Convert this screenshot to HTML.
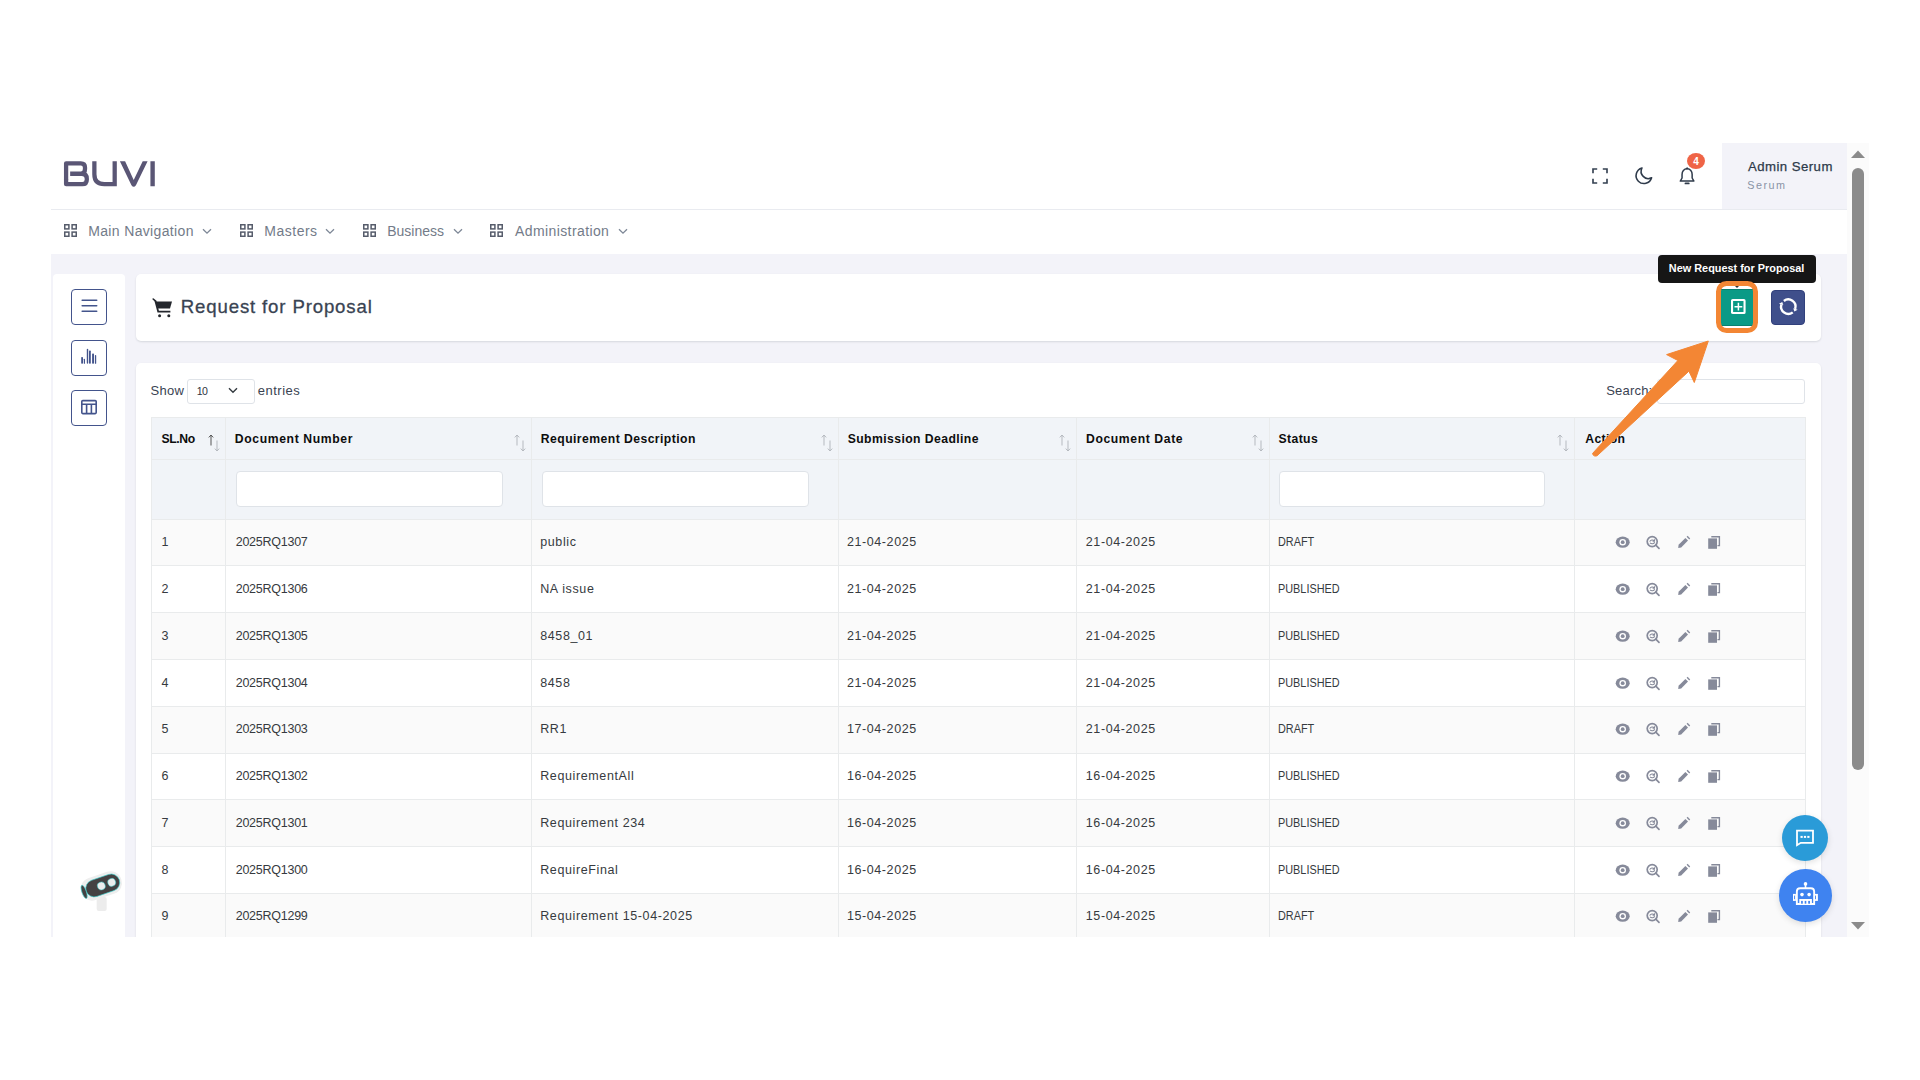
<!DOCTYPE html>
<html><head><meta charset="utf-8"><title>Request for Proposal</title>
<style>
html,body{margin:0;padding:0;}
body{width:1920px;height:1080px;overflow:hidden;background:#fff;position:relative;font-family:"Liberation Sans", sans-serif;}
.b{position:absolute;}
.t{position:absolute;white-space:pre;line-height:1;}
</style></head><body>
<div class="b" style="left:51px;top:143px;width:1796px;height:67px;background:#fff;"></div>
<div class="b" style="left:51px;top:209px;width:1796px;height:1px;background:#e9ebf0;"></div>
<svg class="b" style="left:60px;top:155px;width:100px;height:40px" viewBox="0 0 1920 768">
<g fill="none" stroke="#5a5675" stroke-width="82" stroke-linejoin="round">
<path d="M117,480 V160 H400 Q480,160 480,240 V270 Q480,345 415,360"/>
<path d="M195,360 H415 Q515,360 515,460 V470 Q515,560 430,560 H117 V470"/>
<path d="M660,120 V370 Q660,560 850,560 H1050 M1050,120 V600" stroke-linejoin="miter"/>

</g>
<rect x="1736" y="120" width="84" height="480" fill="#5a5675"/>
<path d="M1150,120 H1250 L1415,478 L1588,120 H1682 L1458,582 Q1415,640 1372,582 Z" fill="#5a5675"/>
</svg>
<svg class="b" style="left:1590px;top:166px;width:20px;height:20px" viewBox="0 0 20 20">
<path d="M3,7.2 V3 H7.2 M12.8,3 H17 V7.2 M17,12.8 V17 H12.8 M7.2,17 H3 V12.8" fill="none" stroke="#354152" stroke-width="1.65"/></svg>
<svg class="b" style="left:1633px;top:166px;width:21px;height:20px" viewBox="0 0 21 20">
<path d="M9,2 A7.9,7.9 0 1 0 18.6,11.8 A7.2,7.2 0 0 1 9,2 Z" fill="none" stroke="#2f3b4b" stroke-width="1.55" stroke-linejoin="round"/></svg>
<svg class="b" style="left:1677px;top:165px;width:20px;height:22px" viewBox="0 0 20 22">
<path d="M10.1,3.8 C6.9,3.8 5.05,6.3 5.05,9.5 V13.0 L3.3,16.1 H16.9 L15.15,13.0 V9.5 C15.15,6.3 13.3,3.8 10.1,3.8 Z" fill="none" stroke="#2f3b4b" stroke-width="1.5" stroke-linejoin="round"/>
<path d="M9.0,4.1 L10.1,2.9 L11.2,4.1" fill="none" stroke="#2f3b4b" stroke-width="1.2"/>
<path d="M8.5,18.4 H11.7" stroke="#2f3b4b" stroke-width="1.9" stroke-linecap="round"/></svg>
<div class="b" style="left:1686.5px;top:152.5px;width:18.5px;height:16.5px;border-radius:50%;background:#ef6446;"></div>
<div class="t" style="left:1693.30px;top:157.13px;font-size:10px;color:#fff;font-weight:700;letter-spacing:0px;">4</div>
<div class="b" style="left:1722px;top:143px;width:125px;height:66px;background:#f3f3f9;"></div>
<div class="t" style="left:1748.00px;top:159.83px;font-size:13.2px;color:#2d3a4a;font-weight:400;letter-spacing:0.45px;-webkit-text-stroke:0.25px #2d3a4a;">Admin Serum</div>
<div class="t" style="left:1747.20px;top:179.86px;font-size:10.8px;color:#8a94a6;font-weight:400;letter-spacing:1.5px;">Serum</div>
<div class="b" style="left:51px;top:254px;width:1796px;height:2px;background:linear-gradient(#e4e5ec,#f3f3f9);"></div>
<div class="b" style="left:51px;top:210px;width:1796px;height:44px;background:#fff;"></div>
<svg class="b" style="left:64px;top:223.5px;width:14px;height:14px" viewBox="0 0 14 14"><g fill="none" stroke="#565c6b" stroke-width="1.5"><rect x="0.75" y="0.75" width="4.15" height="4.15"/><rect x="0.75" y="8.1" width="4.15" height="4.15"/><rect x="8.1" y="0.75" width="4.15" height="4.15"/><rect x="8.1" y="8.1" width="4.15" height="4.15"/></g></svg>
<div class="t" style="left:88.20px;top:223.75px;font-size:14px;color:#737b89;font-weight:400;letter-spacing:0.35px;">Main Navigation</div>
<svg class="b" style="left:202px;top:228px;width:10px;height:7px" viewBox="0 0 10 7"><path d="M1,1.2 L5,5.2 L9,1.2" fill="none" stroke="#7d8796" stroke-width="1.3"/></svg>
<svg class="b" style="left:240px;top:223.5px;width:14px;height:14px" viewBox="0 0 14 14"><g fill="none" stroke="#565c6b" stroke-width="1.5"><rect x="0.75" y="0.75" width="4.15" height="4.15"/><rect x="0.75" y="8.1" width="4.15" height="4.15"/><rect x="8.1" y="0.75" width="4.15" height="4.15"/><rect x="8.1" y="8.1" width="4.15" height="4.15"/></g></svg>
<div class="t" style="left:264.30px;top:223.75px;font-size:14px;color:#737b89;font-weight:400;letter-spacing:0.5px;">Masters</div>
<svg class="b" style="left:325px;top:228px;width:10px;height:7px" viewBox="0 0 10 7"><path d="M1,1.2 L5,5.2 L9,1.2" fill="none" stroke="#7d8796" stroke-width="1.3"/></svg>
<svg class="b" style="left:362.5px;top:223.5px;width:14px;height:14px" viewBox="0 0 14 14"><g fill="none" stroke="#565c6b" stroke-width="1.5"><rect x="0.75" y="0.75" width="4.15" height="4.15"/><rect x="0.75" y="8.1" width="4.15" height="4.15"/><rect x="8.1" y="0.75" width="4.15" height="4.15"/><rect x="8.1" y="8.1" width="4.15" height="4.15"/></g></svg>
<div class="t" style="left:387.20px;top:223.75px;font-size:14px;color:#737b89;font-weight:400;letter-spacing:0.0px;">Business</div>
<svg class="b" style="left:452.5px;top:228px;width:10px;height:7px" viewBox="0 0 10 7"><path d="M1,1.2 L5,5.2 L9,1.2" fill="none" stroke="#7d8796" stroke-width="1.3"/></svg>
<svg class="b" style="left:490.4px;top:223.5px;width:14px;height:14px" viewBox="0 0 14 14"><g fill="none" stroke="#565c6b" stroke-width="1.5"><rect x="0.75" y="0.75" width="4.15" height="4.15"/><rect x="0.75" y="8.1" width="4.15" height="4.15"/><rect x="8.1" y="0.75" width="4.15" height="4.15"/><rect x="8.1" y="8.1" width="4.15" height="4.15"/></g></svg>
<div class="t" style="left:515.00px;top:223.75px;font-size:14px;color:#737b89;font-weight:400;letter-spacing:0.4px;">Administration</div>
<svg class="b" style="left:618px;top:228px;width:10px;height:7px" viewBox="0 0 10 7"><path d="M1,1.2 L5,5.2 L9,1.2" fill="none" stroke="#7d8796" stroke-width="1.3"/></svg>
<div class="b" style="left:51px;top:254px;width:1796px;height:683px;background:#f3f3f9;"></div>
<div class="b" style="left:1847px;top:143px;width:22px;height:794px;background:#fbfbfb;"></div>
<div class="b" style="left:1852px;top:168px;width:12px;height:602px;border-radius:6px;background:#8b8b8b;"></div>
<svg class="b" style="left:1850px;top:149px;width:16px;height:10px" viewBox="0 0 16 10"><path d="M1,9 L8,1.5 L15,9 Z" fill="#8b8b8b"/></svg>
<svg class="b" style="left:1850px;top:921px;width:16px;height:10px" viewBox="0 0 16 10"><path d="M1,1 L15,1 L8,8.5 Z" fill="#8b8b8b"/></svg>
<div class="b" style="left:53px;top:274px;width:72px;height:663px;background:#fff;border-radius:4px 4px 0 0;"></div>
<div class="b" style="left:71px;top:288.5px;width:34px;height:34px;border:1px solid #43548c;border-radius:4px;"></div>
<div class="b" style="left:71px;top:339.5px;width:34px;height:34px;border:1px solid #43548c;border-radius:4px;"></div>
<div class="b" style="left:71px;top:389.8px;width:34px;height:34px;border:1px solid #43548c;border-radius:4px;"></div>
<svg class="b" style="left:80px;top:297px;width:18px;height:18px" viewBox="0 0 18 18">
<path d="M2.2,3.2 H16.7 M2.2,8.7 H16.7 M2.2,14.2 H16.7" stroke="#43548c" stroke-width="1.6" stroke-linecap="round"/></svg>
<svg class="b" style="left:80px;top:348px;width:18px;height:18px" viewBox="0 0 18 18"><g fill="#43548c">
<rect x="1.2" y="9.0" width="1.8" height="6.8" rx="0.7"/><rect x="3.8" y="10.7" width="1.2" height="5.1" rx="0.6"/><rect x="6.8" y="0.8" width="1.4" height="15" rx="0.7"/><rect x="9.0" y="2.5" width="1.8" height="13.3" rx="0.7"/><rect x="12.1" y="5.6" width="1.9" height="10.2" rx="0.7"/><rect x="14.9" y="7.1" width="1.3" height="8.7" rx="0.6"/></g></svg>
<svg class="b" style="left:80px;top:398px;width:18px;height:18px" viewBox="0 0 18 18">
<g fill="none" stroke="#43548c" stroke-width="1.6"><rect x="1.8" y="2.6" width="14.4" height="13" rx="1"/>
<path d="M1.8,6.2 H16.2 M6.6,6.2 V15.6 M11.4,6.2 V15.6"/></g></svg>
<svg class="b" style="left:75px;top:864px;width:52px;height:50px" viewBox="0 0 52 50">
<rect x="21.7" y="33" width="10" height="14" rx="2" fill="#ececec"/>
<g transform="rotate(-19 26 21)">
<rect x="5" y="10.5" width="42" height="23" rx="11" fill="#eeeeee"/>
<rect x="10" y="13.5" width="35" height="17" rx="8.5" fill="#444142" stroke="#3fd0cf" stroke-width="0.6"/>
<ellipse cx="7.8" cy="22" rx="2.2" ry="7" fill="#444142" stroke="#3fd0cf" stroke-width="0.6"/>
<circle cx="26" cy="22" r="3.9" fill="#ececec" stroke="#3fd0cf" stroke-width="0.5"/>
<circle cx="37" cy="22" r="3.9" fill="#ececec" stroke="#3fd0cf" stroke-width="0.5"/>
</g></svg>
<div class="b" style="left:136px;top:274px;width:1684.6px;height:67px;background:#fff;border-radius:5px;box-shadow:0 1px 2px rgba(56,65,74,0.15);"></div>
<svg class="b" style="left:151.7px;top:297.6px;width:22px;height:21px" viewBox="0 0 22 21">
<path d="M1.2,1 L3.6,3.2" stroke="#24272d" stroke-width="1.6" stroke-linecap="round"/>
<path d="M3.2,3.4 H20 L18,10.6 H6 Z" fill="#24272d"/>
<path d="M3.4,3 L6.2,13.6 H18.4" fill="none" stroke="#24272d" stroke-width="1.8"/>
<circle cx="7.6" cy="17.8" r="1.5" fill="#24272d"/><circle cx="16.8" cy="17.8" r="1.5" fill="#24272d"/></svg>
<div class="t" style="left:180.80px;top:297.86px;font-size:18.6px;color:#394352;font-weight:400;letter-spacing:0.86px;-webkit-text-stroke:0.3px #394352;">Request for Proposal</div>
<div class="b" style="left:1771.2px;top:289.9px;width:33.7px;height:34.7px;box-sizing:border-box;border:1px solid #31407c;border-radius:4px;background:#3f4f8b;"></div>
<svg class="b" style="left:1770px;top:288px;width:36px;height:38px" viewBox="0 0 36 38">
<g fill="none" stroke="#fff" stroke-width="2.4"><path d="M22.73,24.37 A7.2,7.2 0 0 1 11.45,16.48"/><path d="M13.87,13.03 A7.2,7.2 0 0 1 25.15,20.92"/></g>
<path d="M12.26,14.00 L8.98,15.67 L13.35,17.09 Z M24.34,23.40 L27.62,21.73 L23.25,20.31 Z" fill="#fff"/></svg>
<div class="b" style="left:1718px;top:283px;width:38px;height:48px;border-radius:10px;background:#fff;"></div>
<div class="b" style="left:1720px;top:289px;width:35px;height:36.5px;box-sizing:border-box;border-top:1px solid #08806f;border-bottom:1px solid #08806f;background:#0a9a86;"></div>
<svg class="b" style="left:1729.5px;top:298px;width:17px;height:17px" viewBox="0 0 17 17">
<rect x="2.05" y="2.05" width="12.5" height="13" rx="0.6" fill="none" stroke="#fff" stroke-width="2.1"/>
<path d="M8.4,4.8 V12.6 M4.5,8.7 H12.3" stroke="#fff" stroke-width="1.5"/></svg>
<div class="b" style="left:1658px;top:255.4px;width:158px;height:27.4px;border-radius:4px;background:#161616;"></div>
<div class="t" style="left:1668.80px;top:263.37px;font-size:10.9px;color:#fff;font-weight:700;letter-spacing:0.0px;">New Request for Proposal</div>
<svg class="b" style="left:1735px;top:285.5px;width:4px;height:3px" viewBox="0 0 4 3"><path d="M0,0 H4 L2,2 Z" fill="#333"/></svg>
<div class="b" style="left:1716px;top:281px;width:42px;height:52px;box-sizing:border-box;border:5px solid #f38634;border-radius:10.5px;"></div>
<div class="b" style="left:136px;top:363px;width:1684.6px;height:600px;background:#fff;border-radius:5px;box-shadow:0 1px 2px rgba(56,65,74,0.15);"></div>
<div class="t" style="left:150.50px;top:384.00px;font-size:13px;color:#3a4352;font-weight:400;letter-spacing:0.3px;">Show</div>
<div class="b" style="left:187.3px;top:378.6px;width:68px;height:25px;box-sizing:border-box;border:1px solid #dfe3e8;border-radius:3px;"></div>
<div class="t" style="left:196.80px;top:385.83px;font-size:10.6px;color:#2f3542;font-weight:400;letter-spacing:-0.7px;">10</div>
<svg class="b" style="left:227.5px;top:386.8px;width:10px;height:7px" viewBox="0 0 10 7"><path d="M1,1.2 L5,5.2 L9,1.2" fill="none" stroke="#343a40" stroke-width="1.4"/></svg>
<div class="t" style="left:257.80px;top:384.00px;font-size:13px;color:#3a4352;font-weight:400;letter-spacing:0.5px;">entries</div>
<div class="t" style="left:1606.20px;top:384.20px;font-size:13px;color:#3a4352;font-weight:400;letter-spacing:0.2px;">Search:</div>
<div class="b" style="left:1657px;top:378.6px;width:148px;height:25px;box-sizing:border-box;border:1px solid #dfe3e8;border-radius:3px;background:#fff;"></div>
<div class="b" style="left:151px;top:417.3px;width:1654px;height:101.90000000000003px;background:#f1f4f8;"></div>
<div class="b" style="left:151px;top:519.20px;width:1654px;height:46.78px;background:#fafafa;"></div>
<div class="b" style="left:151px;top:565.98px;width:1654px;height:46.78px;background:#ffffff;"></div>
<div class="b" style="left:151px;top:612.76px;width:1654px;height:46.78px;background:#fafafa;"></div>
<div class="b" style="left:151px;top:659.54px;width:1654px;height:46.78px;background:#ffffff;"></div>
<div class="b" style="left:151px;top:706.32px;width:1654px;height:46.78px;background:#fafafa;"></div>
<div class="b" style="left:151px;top:753.10px;width:1654px;height:46.78px;background:#ffffff;"></div>
<div class="b" style="left:151px;top:799.88px;width:1654px;height:46.78px;background:#fafafa;"></div>
<div class="b" style="left:151px;top:846.66px;width:1654px;height:46.78px;background:#ffffff;"></div>
<div class="b" style="left:151px;top:893.44px;width:1654px;height:46.78px;background:#fafafa;"></div>
<div class="b" style="left:151px;top:417.30px;width:1654px;height:1px;background:#e9ebec;"></div>
<div class="b" style="left:151px;top:458.80px;width:1654px;height:1px;background:#e9ebec;"></div>
<div class="b" style="left:151px;top:518.60px;width:1654px;height:1px;background:#e9ebec;"></div>
<div class="b" style="left:151px;top:565.38px;width:1654px;height:1px;background:#e9ebec;"></div>
<div class="b" style="left:151px;top:612.16px;width:1654px;height:1px;background:#e9ebec;"></div>
<div class="b" style="left:151px;top:658.94px;width:1654px;height:1px;background:#e9ebec;"></div>
<div class="b" style="left:151px;top:705.72px;width:1654px;height:1px;background:#e9ebec;"></div>
<div class="b" style="left:151px;top:752.50px;width:1654px;height:1px;background:#e9ebec;"></div>
<div class="b" style="left:151px;top:799.28px;width:1654px;height:1px;background:#e9ebec;"></div>
<div class="b" style="left:151px;top:846.06px;width:1654px;height:1px;background:#e9ebec;"></div>
<div class="b" style="left:151px;top:892.84px;width:1654px;height:1px;background:#e9ebec;"></div>
<div class="b" style="left:151px;top:939.62px;width:1654px;height:1px;background:#e9ebec;"></div>
<div class="b" style="left:150.50px;top:417.30px;width:1px;height:519.70px;background:#e9ebec;"></div>
<div class="b" style="left:225.00px;top:417.30px;width:1px;height:519.70px;background:#e9ebec;"></div>
<div class="b" style="left:531.00px;top:417.30px;width:1px;height:519.70px;background:#e9ebec;"></div>
<div class="b" style="left:837.90px;top:417.30px;width:1px;height:519.70px;background:#e9ebec;"></div>
<div class="b" style="left:1076.20px;top:417.30px;width:1px;height:519.70px;background:#e9ebec;"></div>
<div class="b" style="left:1268.70px;top:417.30px;width:1px;height:519.70px;background:#e9ebec;"></div>
<div class="b" style="left:1574.30px;top:417.30px;width:1px;height:519.70px;background:#e9ebec;"></div>
<div class="b" style="left:1804.50px;top:417.30px;width:1px;height:519.70px;background:#e9ebec;"></div>
<div class="t" style="left:161.50px;top:432.77px;font-size:12.2px;color:#0d0d0d;font-weight:700;letter-spacing:-0.4px;">SL.No</div>
<div class="t" style="left:234.80px;top:432.77px;font-size:12.2px;color:#0d0d0d;font-weight:700;letter-spacing:0.62px;">Document Number</div>
<div class="t" style="left:540.80px;top:432.77px;font-size:12.2px;color:#0d0d0d;font-weight:700;letter-spacing:0.44px;">Requirement Description</div>
<div class="t" style="left:847.70px;top:432.77px;font-size:12.2px;color:#0d0d0d;font-weight:700;letter-spacing:0.42px;">Submission Deadline</div>
<div class="t" style="left:1086.00px;top:432.77px;font-size:12.2px;color:#0d0d0d;font-weight:700;letter-spacing:0.6px;">Document Date</div>
<div class="t" style="left:1278.50px;top:432.77px;font-size:12.2px;color:#0d0d0d;font-weight:700;letter-spacing:0.4px;">Status</div>
<div class="t" style="left:1585.30px;top:432.77px;font-size:12.2px;color:#0d0d0d;font-weight:700;letter-spacing:0.35px;">Action</div>
<svg class="b" style="left:208.0px;top:434px;width:12px;height:18px" viewBox="0 0 12 18"><path d="M3,1 V11.5 M0.8,3.4 L3,1 L5.2,3.4" fill="none" stroke="#555" stroke-width="1"/><path d="M9,6.5 V17 M6.8,14.6 L9,17 L11.2,14.6" fill="none" stroke="#b5b9bf" stroke-width="1"/></svg>
<svg class="b" style="left:514.0px;top:434px;width:12px;height:18px" viewBox="0 0 12 18"><path d="M3,1 V11.5 M0.8,3.4 L3,1 L5.2,3.4" fill="none" stroke="#b5b9bf" stroke-width="1"/><path d="M9,6.5 V17 M6.8,14.6 L9,17 L11.2,14.6" fill="none" stroke="#b5b9bf" stroke-width="1"/></svg>
<svg class="b" style="left:820.9px;top:434px;width:12px;height:18px" viewBox="0 0 12 18"><path d="M3,1 V11.5 M0.8,3.4 L3,1 L5.2,3.4" fill="none" stroke="#b5b9bf" stroke-width="1"/><path d="M9,6.5 V17 M6.8,14.6 L9,17 L11.2,14.6" fill="none" stroke="#b5b9bf" stroke-width="1"/></svg>
<svg class="b" style="left:1059.2px;top:434px;width:12px;height:18px" viewBox="0 0 12 18"><path d="M3,1 V11.5 M0.8,3.4 L3,1 L5.2,3.4" fill="none" stroke="#b5b9bf" stroke-width="1"/><path d="M9,6.5 V17 M6.8,14.6 L9,17 L11.2,14.6" fill="none" stroke="#b5b9bf" stroke-width="1"/></svg>
<svg class="b" style="left:1251.7px;top:434px;width:12px;height:18px" viewBox="0 0 12 18"><path d="M3,1 V11.5 M0.8,3.4 L3,1 L5.2,3.4" fill="none" stroke="#b5b9bf" stroke-width="1"/><path d="M9,6.5 V17 M6.8,14.6 L9,17 L11.2,14.6" fill="none" stroke="#b5b9bf" stroke-width="1"/></svg>
<svg class="b" style="left:1557.3px;top:434px;width:12px;height:18px" viewBox="0 0 12 18"><path d="M3,1 V11.5 M0.8,3.4 L3,1 L5.2,3.4" fill="none" stroke="#b5b9bf" stroke-width="1"/><path d="M9,6.5 V17 M6.8,14.6 L9,17 L11.2,14.6" fill="none" stroke="#b5b9bf" stroke-width="1"/></svg>
<div class="b" style="left:236px;top:471.2px;width:266.5px;height:35.8px;box-sizing:border-box;border:1px solid #dfe3e8;border-radius:4px;background:#fff;"></div>
<div class="b" style="left:541.7px;top:471.2px;width:267.29999999999995px;height:35.8px;box-sizing:border-box;border:1px solid #dfe3e8;border-radius:4px;background:#fff;"></div>
<div class="b" style="left:1278.9px;top:471.2px;width:266.5999999999999px;height:35.8px;box-sizing:border-box;border:1px solid #dfe3e8;border-radius:4px;background:#fff;"></div>
<div class="t" style="left:161.50px;top:536.22px;font-size:12.5px;color:#363a40;font-weight:400;letter-spacing:0px;">1</div>
<div class="t" style="left:235.70px;top:536.22px;font-size:12.5px;color:#363a40;font-weight:400;letter-spacing:-0.25px;">2025RQ1307</div>
<div class="t" style="left:540.20px;top:536.22px;font-size:12.5px;color:#363a40;font-weight:400;letter-spacing:0.62px;">public</div>
<div class="t" style="left:846.90px;top:536.22px;font-size:12.5px;color:#363a40;font-weight:400;letter-spacing:0.6px;">21-04-2025</div>
<div class="t" style="left:1085.80px;top:536.22px;font-size:12.5px;color:#363a40;font-weight:400;letter-spacing:0.6px;">21-04-2025</div>
<div class="t" style="left:1277.50px;top:536.22px;font-size:12.5px;color:#363a40;font-weight:400;letter-spacing:0px;transform:scaleX(0.87);transform-origin:0 0;">DRAFT</div>
<svg class="b" style="left:1613px;top:533.20px;width:116px;height:18px" viewBox="0 0 116 18">
<ellipse cx="9.7" cy="9.2" rx="7" ry="5.6" fill="#868a9a"/>
<circle cx="9.7" cy="9.2" r="3.3" fill="#fff"/><circle cx="9.7" cy="9.2" r="1.9" fill="#868a9a"/>
<circle cx="39.2" cy="8.6" r="5" fill="none" stroke="#868a9a" stroke-width="1.7"/>
<path d="M42.8,12.2 L46.0,15.4" stroke="#868a9a" stroke-width="1.7" stroke-linecap="round"/>
<path d="M36.7,8.6 C37.4,6.9 40,6.4 41.4,7.9 M41.6,6.2 L41.5,8.2 L39.6,8.1 M41.7,9.3 C41,11 38.4,11.3 37,9.8" fill="none" stroke="#868a9a" stroke-width="1.1"/>
<path d="M65.2,15.0 L65.6,11.8 L72.4,5.0 L75.0,7.6 L68.2,14.4 Z" fill="#868a9a"/>
<path d="M73.6,3.8 L74.6,2.8 L77.2,5.4 L76.2,6.4 Z" fill="#868a9a"/>
<path d="M98.3,3.8 H106.4 V12.6 H104.5" fill="none" stroke="#868a9a" stroke-width="1.4"/>
<rect x="95.2" y="5.4" width="8.8" height="10.4" fill="#868a9a"/>
</svg>
<div class="t" style="left:161.50px;top:583.00px;font-size:12.5px;color:#363a40;font-weight:400;letter-spacing:0px;">2</div>
<div class="t" style="left:235.70px;top:583.00px;font-size:12.5px;color:#363a40;font-weight:400;letter-spacing:-0.25px;">2025RQ1306</div>
<div class="t" style="left:540.20px;top:583.00px;font-size:12.5px;color:#363a40;font-weight:400;letter-spacing:0.62px;">NA issue</div>
<div class="t" style="left:846.90px;top:583.00px;font-size:12.5px;color:#363a40;font-weight:400;letter-spacing:0.6px;">21-04-2025</div>
<div class="t" style="left:1085.80px;top:583.00px;font-size:12.5px;color:#363a40;font-weight:400;letter-spacing:0.6px;">21-04-2025</div>
<div class="t" style="left:1277.50px;top:583.00px;font-size:12.5px;color:#363a40;font-weight:400;letter-spacing:0px;transform:scaleX(0.87);transform-origin:0 0;">PUBLISHED</div>
<svg class="b" style="left:1613px;top:579.98px;width:116px;height:18px" viewBox="0 0 116 18">
<ellipse cx="9.7" cy="9.2" rx="7" ry="5.6" fill="#868a9a"/>
<circle cx="9.7" cy="9.2" r="3.3" fill="#fff"/><circle cx="9.7" cy="9.2" r="1.9" fill="#868a9a"/>
<circle cx="39.2" cy="8.6" r="5" fill="none" stroke="#868a9a" stroke-width="1.7"/>
<path d="M42.8,12.2 L46.0,15.4" stroke="#868a9a" stroke-width="1.7" stroke-linecap="round"/>
<path d="M36.7,8.6 C37.4,6.9 40,6.4 41.4,7.9 M41.6,6.2 L41.5,8.2 L39.6,8.1 M41.7,9.3 C41,11 38.4,11.3 37,9.8" fill="none" stroke="#868a9a" stroke-width="1.1"/>
<path d="M65.2,15.0 L65.6,11.8 L72.4,5.0 L75.0,7.6 L68.2,14.4 Z" fill="#868a9a"/>
<path d="M73.6,3.8 L74.6,2.8 L77.2,5.4 L76.2,6.4 Z" fill="#868a9a"/>
<path d="M98.3,3.8 H106.4 V12.6 H104.5" fill="none" stroke="#868a9a" stroke-width="1.4"/>
<rect x="95.2" y="5.4" width="8.8" height="10.4" fill="#868a9a"/>
</svg>
<div class="t" style="left:161.50px;top:629.78px;font-size:12.5px;color:#363a40;font-weight:400;letter-spacing:0px;">3</div>
<div class="t" style="left:235.70px;top:629.78px;font-size:12.5px;color:#363a40;font-weight:400;letter-spacing:-0.25px;">2025RQ1305</div>
<div class="t" style="left:540.20px;top:629.78px;font-size:12.5px;color:#363a40;font-weight:400;letter-spacing:0.62px;">8458_01</div>
<div class="t" style="left:846.90px;top:629.78px;font-size:12.5px;color:#363a40;font-weight:400;letter-spacing:0.6px;">21-04-2025</div>
<div class="t" style="left:1085.80px;top:629.78px;font-size:12.5px;color:#363a40;font-weight:400;letter-spacing:0.6px;">21-04-2025</div>
<div class="t" style="left:1277.50px;top:629.78px;font-size:12.5px;color:#363a40;font-weight:400;letter-spacing:0px;transform:scaleX(0.87);transform-origin:0 0;">PUBLISHED</div>
<svg class="b" style="left:1613px;top:626.76px;width:116px;height:18px" viewBox="0 0 116 18">
<ellipse cx="9.7" cy="9.2" rx="7" ry="5.6" fill="#868a9a"/>
<circle cx="9.7" cy="9.2" r="3.3" fill="#fff"/><circle cx="9.7" cy="9.2" r="1.9" fill="#868a9a"/>
<circle cx="39.2" cy="8.6" r="5" fill="none" stroke="#868a9a" stroke-width="1.7"/>
<path d="M42.8,12.2 L46.0,15.4" stroke="#868a9a" stroke-width="1.7" stroke-linecap="round"/>
<path d="M36.7,8.6 C37.4,6.9 40,6.4 41.4,7.9 M41.6,6.2 L41.5,8.2 L39.6,8.1 M41.7,9.3 C41,11 38.4,11.3 37,9.8" fill="none" stroke="#868a9a" stroke-width="1.1"/>
<path d="M65.2,15.0 L65.6,11.8 L72.4,5.0 L75.0,7.6 L68.2,14.4 Z" fill="#868a9a"/>
<path d="M73.6,3.8 L74.6,2.8 L77.2,5.4 L76.2,6.4 Z" fill="#868a9a"/>
<path d="M98.3,3.8 H106.4 V12.6 H104.5" fill="none" stroke="#868a9a" stroke-width="1.4"/>
<rect x="95.2" y="5.4" width="8.8" height="10.4" fill="#868a9a"/>
</svg>
<div class="t" style="left:161.50px;top:676.56px;font-size:12.5px;color:#363a40;font-weight:400;letter-spacing:0px;">4</div>
<div class="t" style="left:235.70px;top:676.56px;font-size:12.5px;color:#363a40;font-weight:400;letter-spacing:-0.25px;">2025RQ1304</div>
<div class="t" style="left:540.20px;top:676.56px;font-size:12.5px;color:#363a40;font-weight:400;letter-spacing:0.62px;">8458</div>
<div class="t" style="left:846.90px;top:676.56px;font-size:12.5px;color:#363a40;font-weight:400;letter-spacing:0.6px;">21-04-2025</div>
<div class="t" style="left:1085.80px;top:676.56px;font-size:12.5px;color:#363a40;font-weight:400;letter-spacing:0.6px;">21-04-2025</div>
<div class="t" style="left:1277.50px;top:676.56px;font-size:12.5px;color:#363a40;font-weight:400;letter-spacing:0px;transform:scaleX(0.87);transform-origin:0 0;">PUBLISHED</div>
<svg class="b" style="left:1613px;top:673.54px;width:116px;height:18px" viewBox="0 0 116 18">
<ellipse cx="9.7" cy="9.2" rx="7" ry="5.6" fill="#868a9a"/>
<circle cx="9.7" cy="9.2" r="3.3" fill="#fff"/><circle cx="9.7" cy="9.2" r="1.9" fill="#868a9a"/>
<circle cx="39.2" cy="8.6" r="5" fill="none" stroke="#868a9a" stroke-width="1.7"/>
<path d="M42.8,12.2 L46.0,15.4" stroke="#868a9a" stroke-width="1.7" stroke-linecap="round"/>
<path d="M36.7,8.6 C37.4,6.9 40,6.4 41.4,7.9 M41.6,6.2 L41.5,8.2 L39.6,8.1 M41.7,9.3 C41,11 38.4,11.3 37,9.8" fill="none" stroke="#868a9a" stroke-width="1.1"/>
<path d="M65.2,15.0 L65.6,11.8 L72.4,5.0 L75.0,7.6 L68.2,14.4 Z" fill="#868a9a"/>
<path d="M73.6,3.8 L74.6,2.8 L77.2,5.4 L76.2,6.4 Z" fill="#868a9a"/>
<path d="M98.3,3.8 H106.4 V12.6 H104.5" fill="none" stroke="#868a9a" stroke-width="1.4"/>
<rect x="95.2" y="5.4" width="8.8" height="10.4" fill="#868a9a"/>
</svg>
<div class="t" style="left:161.50px;top:723.34px;font-size:12.5px;color:#363a40;font-weight:400;letter-spacing:0px;">5</div>
<div class="t" style="left:235.70px;top:723.34px;font-size:12.5px;color:#363a40;font-weight:400;letter-spacing:-0.25px;">2025RQ1303</div>
<div class="t" style="left:540.20px;top:723.34px;font-size:12.5px;color:#363a40;font-weight:400;letter-spacing:0.62px;">RR1</div>
<div class="t" style="left:846.90px;top:723.34px;font-size:12.5px;color:#363a40;font-weight:400;letter-spacing:0.6px;">17-04-2025</div>
<div class="t" style="left:1085.80px;top:723.34px;font-size:12.5px;color:#363a40;font-weight:400;letter-spacing:0.6px;">21-04-2025</div>
<div class="t" style="left:1277.50px;top:723.34px;font-size:12.5px;color:#363a40;font-weight:400;letter-spacing:0px;transform:scaleX(0.87);transform-origin:0 0;">DRAFT</div>
<svg class="b" style="left:1613px;top:720.32px;width:116px;height:18px" viewBox="0 0 116 18">
<ellipse cx="9.7" cy="9.2" rx="7" ry="5.6" fill="#868a9a"/>
<circle cx="9.7" cy="9.2" r="3.3" fill="#fff"/><circle cx="9.7" cy="9.2" r="1.9" fill="#868a9a"/>
<circle cx="39.2" cy="8.6" r="5" fill="none" stroke="#868a9a" stroke-width="1.7"/>
<path d="M42.8,12.2 L46.0,15.4" stroke="#868a9a" stroke-width="1.7" stroke-linecap="round"/>
<path d="M36.7,8.6 C37.4,6.9 40,6.4 41.4,7.9 M41.6,6.2 L41.5,8.2 L39.6,8.1 M41.7,9.3 C41,11 38.4,11.3 37,9.8" fill="none" stroke="#868a9a" stroke-width="1.1"/>
<path d="M65.2,15.0 L65.6,11.8 L72.4,5.0 L75.0,7.6 L68.2,14.4 Z" fill="#868a9a"/>
<path d="M73.6,3.8 L74.6,2.8 L77.2,5.4 L76.2,6.4 Z" fill="#868a9a"/>
<path d="M98.3,3.8 H106.4 V12.6 H104.5" fill="none" stroke="#868a9a" stroke-width="1.4"/>
<rect x="95.2" y="5.4" width="8.8" height="10.4" fill="#868a9a"/>
</svg>
<div class="t" style="left:161.50px;top:770.12px;font-size:12.5px;color:#363a40;font-weight:400;letter-spacing:0px;">6</div>
<div class="t" style="left:235.70px;top:770.12px;font-size:12.5px;color:#363a40;font-weight:400;letter-spacing:-0.25px;">2025RQ1302</div>
<div class="t" style="left:540.20px;top:770.12px;font-size:12.5px;color:#363a40;font-weight:400;letter-spacing:0.62px;">RequirementAll</div>
<div class="t" style="left:846.90px;top:770.12px;font-size:12.5px;color:#363a40;font-weight:400;letter-spacing:0.6px;">16-04-2025</div>
<div class="t" style="left:1085.80px;top:770.12px;font-size:12.5px;color:#363a40;font-weight:400;letter-spacing:0.6px;">16-04-2025</div>
<div class="t" style="left:1277.50px;top:770.12px;font-size:12.5px;color:#363a40;font-weight:400;letter-spacing:0px;transform:scaleX(0.87);transform-origin:0 0;">PUBLISHED</div>
<svg class="b" style="left:1613px;top:767.10px;width:116px;height:18px" viewBox="0 0 116 18">
<ellipse cx="9.7" cy="9.2" rx="7" ry="5.6" fill="#868a9a"/>
<circle cx="9.7" cy="9.2" r="3.3" fill="#fff"/><circle cx="9.7" cy="9.2" r="1.9" fill="#868a9a"/>
<circle cx="39.2" cy="8.6" r="5" fill="none" stroke="#868a9a" stroke-width="1.7"/>
<path d="M42.8,12.2 L46.0,15.4" stroke="#868a9a" stroke-width="1.7" stroke-linecap="round"/>
<path d="M36.7,8.6 C37.4,6.9 40,6.4 41.4,7.9 M41.6,6.2 L41.5,8.2 L39.6,8.1 M41.7,9.3 C41,11 38.4,11.3 37,9.8" fill="none" stroke="#868a9a" stroke-width="1.1"/>
<path d="M65.2,15.0 L65.6,11.8 L72.4,5.0 L75.0,7.6 L68.2,14.4 Z" fill="#868a9a"/>
<path d="M73.6,3.8 L74.6,2.8 L77.2,5.4 L76.2,6.4 Z" fill="#868a9a"/>
<path d="M98.3,3.8 H106.4 V12.6 H104.5" fill="none" stroke="#868a9a" stroke-width="1.4"/>
<rect x="95.2" y="5.4" width="8.8" height="10.4" fill="#868a9a"/>
</svg>
<div class="t" style="left:161.50px;top:816.90px;font-size:12.5px;color:#363a40;font-weight:400;letter-spacing:0px;">7</div>
<div class="t" style="left:235.70px;top:816.90px;font-size:12.5px;color:#363a40;font-weight:400;letter-spacing:-0.25px;">2025RQ1301</div>
<div class="t" style="left:540.20px;top:816.90px;font-size:12.5px;color:#363a40;font-weight:400;letter-spacing:0.62px;">Requirement 234</div>
<div class="t" style="left:846.90px;top:816.90px;font-size:12.5px;color:#363a40;font-weight:400;letter-spacing:0.6px;">16-04-2025</div>
<div class="t" style="left:1085.80px;top:816.90px;font-size:12.5px;color:#363a40;font-weight:400;letter-spacing:0.6px;">16-04-2025</div>
<div class="t" style="left:1277.50px;top:816.90px;font-size:12.5px;color:#363a40;font-weight:400;letter-spacing:0px;transform:scaleX(0.87);transform-origin:0 0;">PUBLISHED</div>
<svg class="b" style="left:1613px;top:813.88px;width:116px;height:18px" viewBox="0 0 116 18">
<ellipse cx="9.7" cy="9.2" rx="7" ry="5.6" fill="#868a9a"/>
<circle cx="9.7" cy="9.2" r="3.3" fill="#fff"/><circle cx="9.7" cy="9.2" r="1.9" fill="#868a9a"/>
<circle cx="39.2" cy="8.6" r="5" fill="none" stroke="#868a9a" stroke-width="1.7"/>
<path d="M42.8,12.2 L46.0,15.4" stroke="#868a9a" stroke-width="1.7" stroke-linecap="round"/>
<path d="M36.7,8.6 C37.4,6.9 40,6.4 41.4,7.9 M41.6,6.2 L41.5,8.2 L39.6,8.1 M41.7,9.3 C41,11 38.4,11.3 37,9.8" fill="none" stroke="#868a9a" stroke-width="1.1"/>
<path d="M65.2,15.0 L65.6,11.8 L72.4,5.0 L75.0,7.6 L68.2,14.4 Z" fill="#868a9a"/>
<path d="M73.6,3.8 L74.6,2.8 L77.2,5.4 L76.2,6.4 Z" fill="#868a9a"/>
<path d="M98.3,3.8 H106.4 V12.6 H104.5" fill="none" stroke="#868a9a" stroke-width="1.4"/>
<rect x="95.2" y="5.4" width="8.8" height="10.4" fill="#868a9a"/>
</svg>
<div class="t" style="left:161.50px;top:863.68px;font-size:12.5px;color:#363a40;font-weight:400;letter-spacing:0px;">8</div>
<div class="t" style="left:235.70px;top:863.68px;font-size:12.5px;color:#363a40;font-weight:400;letter-spacing:-0.25px;">2025RQ1300</div>
<div class="t" style="left:540.20px;top:863.68px;font-size:12.5px;color:#363a40;font-weight:400;letter-spacing:0.62px;">RequireFinal</div>
<div class="t" style="left:846.90px;top:863.68px;font-size:12.5px;color:#363a40;font-weight:400;letter-spacing:0.6px;">16-04-2025</div>
<div class="t" style="left:1085.80px;top:863.68px;font-size:12.5px;color:#363a40;font-weight:400;letter-spacing:0.6px;">16-04-2025</div>
<div class="t" style="left:1277.50px;top:863.68px;font-size:12.5px;color:#363a40;font-weight:400;letter-spacing:0px;transform:scaleX(0.87);transform-origin:0 0;">PUBLISHED</div>
<svg class="b" style="left:1613px;top:860.66px;width:116px;height:18px" viewBox="0 0 116 18">
<ellipse cx="9.7" cy="9.2" rx="7" ry="5.6" fill="#868a9a"/>
<circle cx="9.7" cy="9.2" r="3.3" fill="#fff"/><circle cx="9.7" cy="9.2" r="1.9" fill="#868a9a"/>
<circle cx="39.2" cy="8.6" r="5" fill="none" stroke="#868a9a" stroke-width="1.7"/>
<path d="M42.8,12.2 L46.0,15.4" stroke="#868a9a" stroke-width="1.7" stroke-linecap="round"/>
<path d="M36.7,8.6 C37.4,6.9 40,6.4 41.4,7.9 M41.6,6.2 L41.5,8.2 L39.6,8.1 M41.7,9.3 C41,11 38.4,11.3 37,9.8" fill="none" stroke="#868a9a" stroke-width="1.1"/>
<path d="M65.2,15.0 L65.6,11.8 L72.4,5.0 L75.0,7.6 L68.2,14.4 Z" fill="#868a9a"/>
<path d="M73.6,3.8 L74.6,2.8 L77.2,5.4 L76.2,6.4 Z" fill="#868a9a"/>
<path d="M98.3,3.8 H106.4 V12.6 H104.5" fill="none" stroke="#868a9a" stroke-width="1.4"/>
<rect x="95.2" y="5.4" width="8.8" height="10.4" fill="#868a9a"/>
</svg>
<div class="t" style="left:161.50px;top:910.46px;font-size:12.5px;color:#363a40;font-weight:400;letter-spacing:0px;">9</div>
<div class="t" style="left:235.70px;top:910.46px;font-size:12.5px;color:#363a40;font-weight:400;letter-spacing:-0.25px;">2025RQ1299</div>
<div class="t" style="left:540.20px;top:910.46px;font-size:12.5px;color:#363a40;font-weight:400;letter-spacing:0.62px;">Requirement 15-04-2025</div>
<div class="t" style="left:846.90px;top:910.46px;font-size:12.5px;color:#363a40;font-weight:400;letter-spacing:0.6px;">15-04-2025</div>
<div class="t" style="left:1085.80px;top:910.46px;font-size:12.5px;color:#363a40;font-weight:400;letter-spacing:0.6px;">15-04-2025</div>
<div class="t" style="left:1277.50px;top:910.46px;font-size:12.5px;color:#363a40;font-weight:400;letter-spacing:0px;transform:scaleX(0.87);transform-origin:0 0;">DRAFT</div>
<svg class="b" style="left:1613px;top:907.44px;width:116px;height:18px" viewBox="0 0 116 18">
<ellipse cx="9.7" cy="9.2" rx="7" ry="5.6" fill="#868a9a"/>
<circle cx="9.7" cy="9.2" r="3.3" fill="#fff"/><circle cx="9.7" cy="9.2" r="1.9" fill="#868a9a"/>
<circle cx="39.2" cy="8.6" r="5" fill="none" stroke="#868a9a" stroke-width="1.7"/>
<path d="M42.8,12.2 L46.0,15.4" stroke="#868a9a" stroke-width="1.7" stroke-linecap="round"/>
<path d="M36.7,8.6 C37.4,6.9 40,6.4 41.4,7.9 M41.6,6.2 L41.5,8.2 L39.6,8.1 M41.7,9.3 C41,11 38.4,11.3 37,9.8" fill="none" stroke="#868a9a" stroke-width="1.1"/>
<path d="M65.2,15.0 L65.6,11.8 L72.4,5.0 L75.0,7.6 L68.2,14.4 Z" fill="#868a9a"/>
<path d="M73.6,3.8 L74.6,2.8 L77.2,5.4 L76.2,6.4 Z" fill="#868a9a"/>
<path d="M98.3,3.8 H106.4 V12.6 H104.5" fill="none" stroke="#868a9a" stroke-width="1.4"/>
<rect x="95.2" y="5.4" width="8.8" height="10.4" fill="#868a9a"/>
</svg>
<div class="b" style="left:1782px;top:815px;width:46px;height:46px;border-radius:50%;background:#2a9bd8;box-shadow:0 2px 6px rgba(0,0,0,0.12);"></div>
<svg class="b" style="left:1795px;top:828px;width:20px;height:20px" viewBox="0 0 20 20">
<path d="M2,2.6 H18 V14.8 H5.8 L2,17.2 Z" fill="none" stroke="#fff" stroke-width="1.8" stroke-linejoin="miter"/>
<rect x="5.5" y="7.9" width="2.2" height="2" fill="#fff"/><rect x="8.9" y="7.9" width="2.2" height="2" fill="#fff"/><rect x="12.3" y="7.9" width="2.2" height="2" fill="#fff"/></svg>
<div class="b" style="left:1779px;top:869.3px;width:52.5px;height:52.5px;border-radius:50%;background:#3f83f0;box-shadow:0 2px 6px rgba(0,0,0,0.12);"></div>
<svg class="b" style="left:1788px;top:876px;width:34px;height:34px" viewBox="0 0 34 34">
<circle cx="17.5" cy="7.9" r="1.8" fill="#fff"/><path d="M17.5,8 V12" stroke="#fff" stroke-width="1.6"/>
<path d="M8.85,28.05 V15.6 Q8.85,12.25 12.2,12.25 H22.8 Q26.15,12.25 26.15,15.6 V28.05 Z" fill="none" stroke="#fff" stroke-width="1.9"/>
<rect x="5.0" y="17.9" width="2.9" height="7" fill="#fff"/><rect x="6.0" y="19.6" width="0.9" height="3.6" fill="#3f83f0"/>
<rect x="26.1" y="17.9" width="3.8" height="7" fill="#fff"/><rect x="27.1" y="19.6" width="0.9" height="3.6" fill="#3f83f0"/>
<circle cx="14.0" cy="18.6" r="1.8" fill="#fff"/><circle cx="21.1" cy="18.6" r="1.8" fill="#fff"/>
<rect x="11.3" y="23" width="12.6" height="5" fill="#fff"/>
<rect x="13.1" y="24.9" width="1.7" height="2.8" fill="#3f83f0"/><rect x="16.7" y="24.9" width="1.6" height="2.8" fill="#3f83f0"/><rect x="20.2" y="24.9" width="1.8" height="2.8" fill="#3f83f0"/>
</svg>
<svg class="b" style="left:0;top:0;width:1920px;height:1080px" viewBox="0 0 1920 1080">
<path d="M1708.3,341 L1694.3,382.5 L1688.9,371.2 L1597,455.8 Q1593.5,457 1592.5,453.5 L1677.9,360.5 L1666.6,354.6 Z" fill="#f38634" stroke="#f38634" stroke-width="1" stroke-linejoin="round"/>
</svg>
<div class="b" style="left:0px;top:937px;width:1920px;height:143px;background:#fff;"></div>
</body></html>
